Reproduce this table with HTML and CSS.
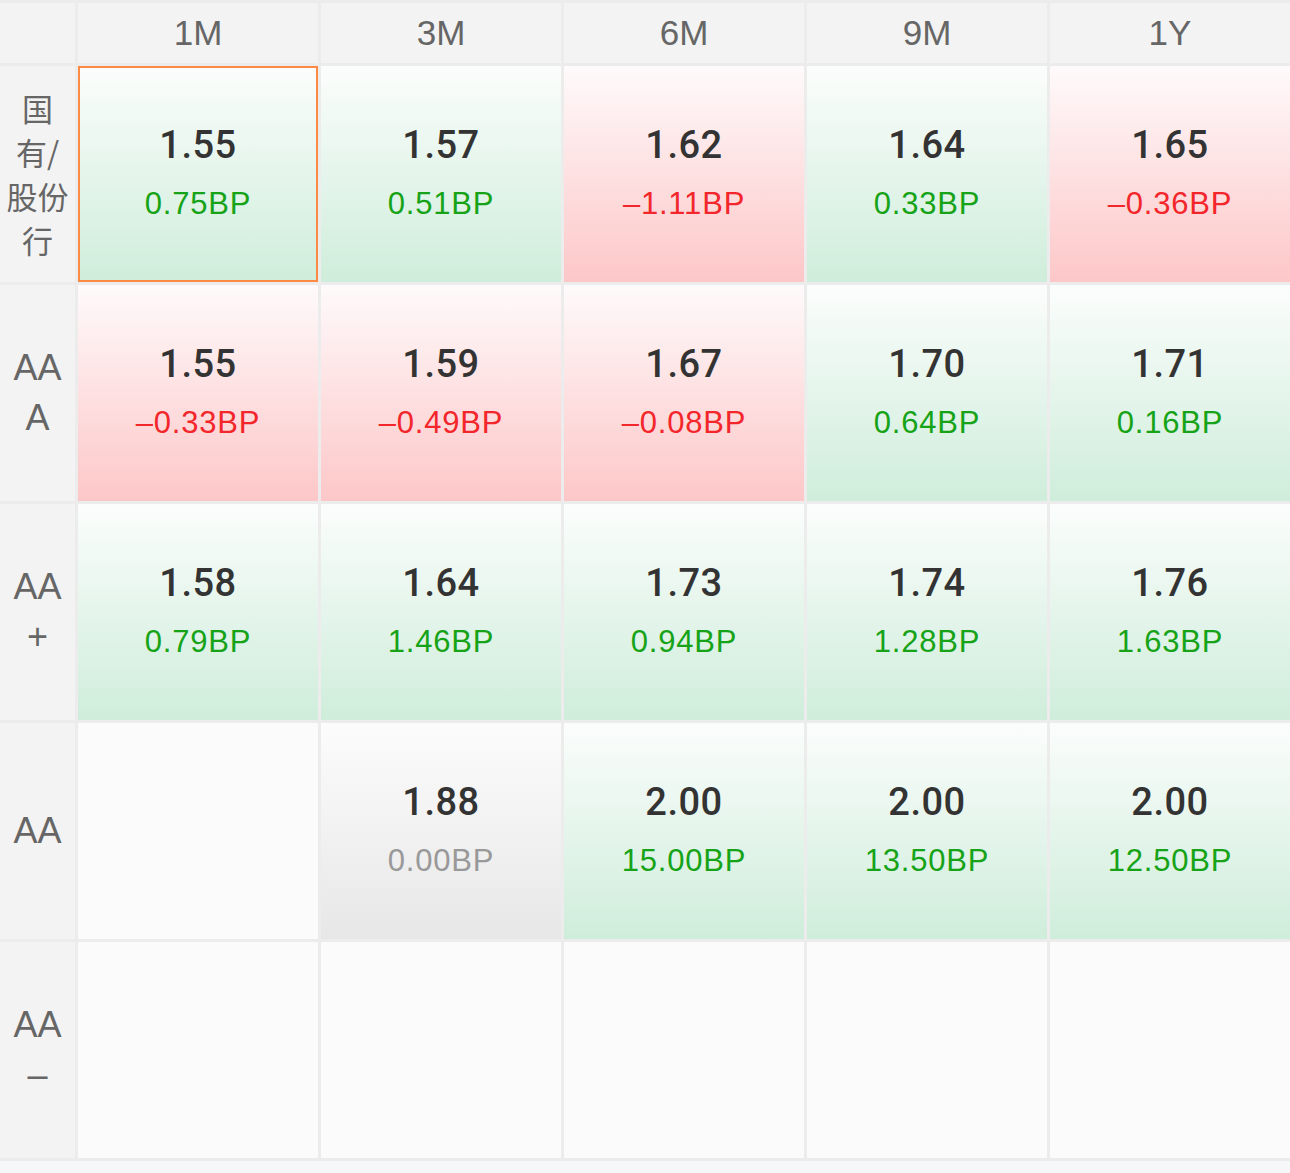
FILE: index.html
```html
<!DOCTYPE html>
<html lang="zh">
<head>
<meta charset="utf-8">
<title>Rates</title>
<link rel="stylesheet" href="styles.css">
</head>
<body>
<div class="grid">
  <div class="corner"></div>
  <div class="head">1M</div>
  <div class="head">3M</div>
  <div class="head">6M</div>
  <div class="head">9M</div>
  <div class="head">1Y</div>

  <div class="label cjk">国<br>有/<br>股份<br>行</div>
  <div class="cell up selected"><div class="val">1.55</div><div class="bp">0.75BP</div></div>
  <div class="cell up"><div class="val">1.57</div><div class="bp">0.51BP</div></div>
  <div class="cell down"><div class="val">1.62</div><div class="bp">–1.11BP</div></div>
  <div class="cell up"><div class="val">1.64</div><div class="bp">0.33BP</div></div>
  <div class="cell down"><div class="val">1.65</div><div class="bp">–0.36BP</div></div>

  <div class="label">AA<br>A</div>
  <div class="cell down"><div class="val">1.55</div><div class="bp">–0.33BP</div></div>
  <div class="cell down"><div class="val">1.59</div><div class="bp">–0.49BP</div></div>
  <div class="cell down"><div class="val">1.67</div><div class="bp">–0.08BP</div></div>
  <div class="cell up"><div class="val">1.70</div><div class="bp">0.64BP</div></div>
  <div class="cell up"><div class="val">1.71</div><div class="bp">0.16BP</div></div>

  <div class="label">AA<br>+</div>
  <div class="cell up"><div class="val">1.58</div><div class="bp">0.79BP</div></div>
  <div class="cell up"><div class="val">1.64</div><div class="bp">1.46BP</div></div>
  <div class="cell up"><div class="val">1.73</div><div class="bp">0.94BP</div></div>
  <div class="cell up"><div class="val">1.74</div><div class="bp">1.28BP</div></div>
  <div class="cell up"><div class="val">1.76</div><div class="bp">1.63BP</div></div>

  <div class="label">AA</div>
  <div class="cell empty"></div>
  <div class="cell flat"><div class="val">1.88</div><div class="bp">0.00BP</div></div>
  <div class="cell up"><div class="val">2.00</div><div class="bp">15.00BP</div></div>
  <div class="cell up"><div class="val">2.00</div><div class="bp">13.50BP</div></div>
  <div class="cell up"><div class="val">2.00</div><div class="bp">12.50BP</div></div>

  <div class="label">AA<br>–</div>
  <div class="cell empty"></div>
  <div class="cell empty"></div>
  <div class="cell empty"></div>
  <div class="cell empty"></div>
  <div class="cell empty"></div>
</div>
</body>
</html>
```

FILE: styles.css
```css
html, body {
  margin: 0;
  padding: 0;
}

body {
  background: #f6f7f9;
  font-family: "Liberation Sans", "Noto Sans CJK SC", sans-serif;
  width: 1290px;
}

.grid {
  display: grid;
  grid-template-columns: 75px repeat(5, 240px);
  grid-template-rows: 60px repeat(5, 216px);
  gap: 3px;
  padding: 3px 0;
  background: #ececec;
}

.corner,
.head,
.label {
  background: #f3f3f3;
}

.head {
  display: flex;
  align-items: center;
  justify-content: center;
  color: #666;
  font-size: 35px;
}

.label {
  display: flex;
  align-items: center;
  justify-content: center;
  text-align: center;
  color: #666;
  font-size: 36px;
  line-height: 50px;
}

.label.cjk {
  font-family: "Noto Sans CJK SC", sans-serif;
  font-size: 31px;
  line-height: 44px;
}

.cell {
  display: flex;
  flex-direction: column;
  align-items: center;
  justify-content: center;
  gap: 7px;
  box-sizing: border-box;
}

.cell.up {
  background: linear-gradient(to bottom, #fbfdfc 0%, #cfeddb 100%);
}

.cell.down {
  background: linear-gradient(to bottom, #fefafb 0%, #fdc7c8 100%);
}

.cell.flat {
  background: linear-gradient(to bottom, #fcfcfc 0%, #e7e7e7 100%);
}

.cell.empty {
  background: #fbfbfb;
}

.cell.selected {
  box-shadow: inset 0 0 0 2px #fd8a43;
}

.val {
  font-family: "Roboto", "Liberation Sans", sans-serif;
  font-weight: 500;
  font-size: 38px;
  line-height: 52px;
  letter-spacing: 0.5px;
  color: #333;
}

.bp {
  font-size: 31px;
  line-height: 52px;
  letter-spacing: 0.8px;
}

.up .bp {
  color: #17a317;
}

.down .bp {
  color: #f2262b;
}

.flat .bp {
  color: #999;
}
```
